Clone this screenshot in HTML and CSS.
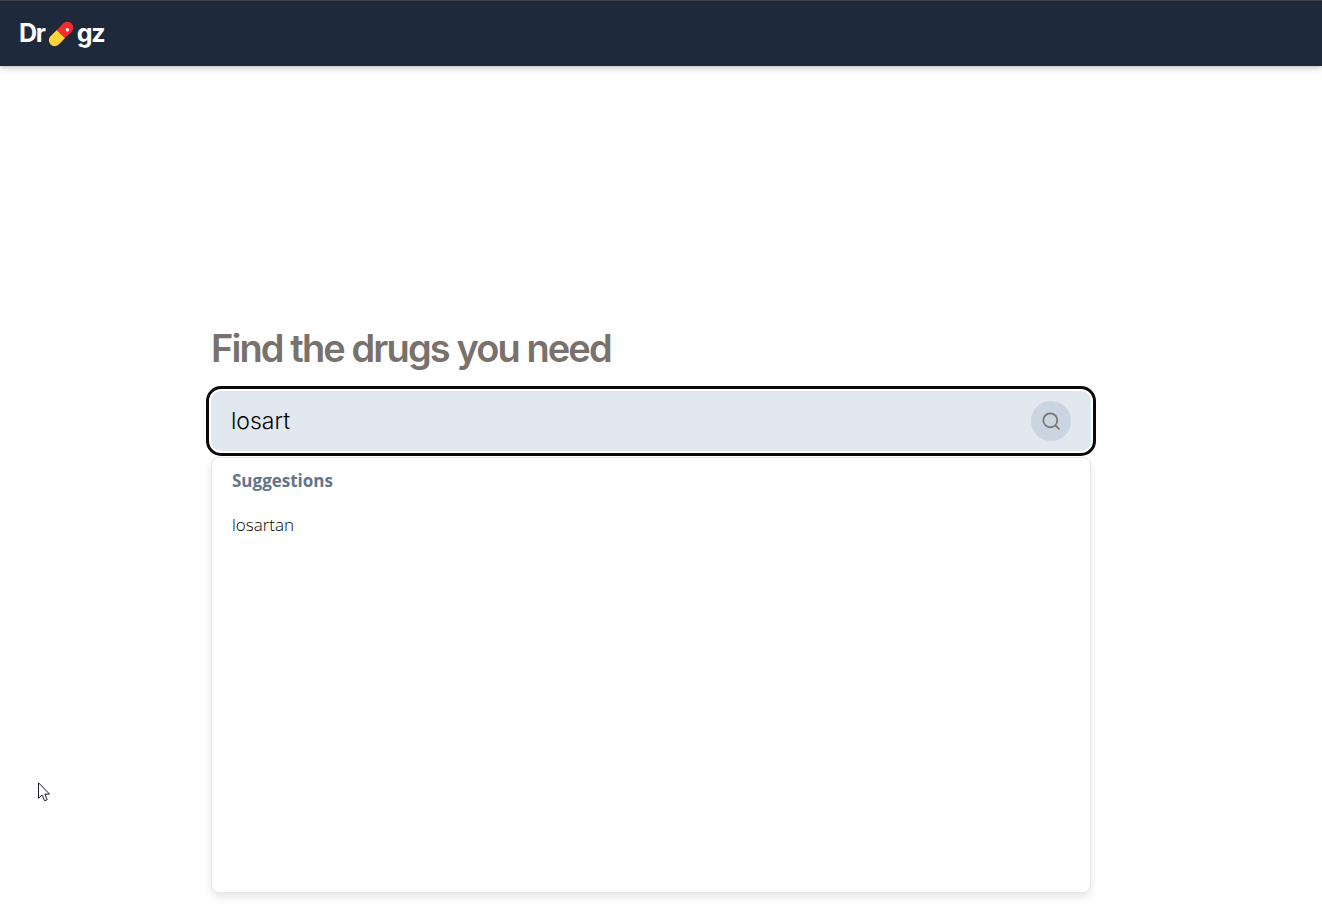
FILE: index.html
```html
<!DOCTYPE html>
<html lang="en">
<head>
<meta charset="utf-8">
<meta name="viewport" content="width=device-width, initial-scale=1">
<title>Drugz</title>
<link rel="stylesheet" href="styles.css">
</head>
<body>
<header class="site-header">
  <a class="brand" href="#" aria-label="Drugz home">
    <span>Dr</span>
    <svg class="brand-pill" viewBox="0 0 26 26" aria-hidden="true">
      <g transform="rotate(-45 13 13)">
        <path d="M13 7.200H4a5.800 5.800 0 0 0 0 11.600H13z" fill="#ffd43b"/>
        <path d="M13 7.200h9a5.800 5.800 0 0 1 0 11.600H13z" fill="#fc2b2f"/>
        <circle cx="20.500" cy="14.500" r="1.700" fill="#fff"/>
      </g>
    </svg>
    <span>gz</span>
  </a>
</header>
<main class="page">
  <section class="finder">
    <h1 class="title"><label for="drug-search">Find the drugs you need</label></h1>
    <form class="search">
      <input class="search-input" id="drug-search" type="text" value="losart" autocomplete="off" spellcheck="false">
      <button class="search-button" type="submit" aria-label="Search">
        <svg class="search-icon" viewBox="0 0 20 20" aria-hidden="true">
          <circle cx="9.300" cy="9.300" r="7"/>
          <path d="M14.200 14.200l4.300 4.300"/>
        </svg>
      </button>
    </form>
    <div class="suggestions">
      <h2 class="suggestions-title">Suggestions</h2>
      <ul class="suggestions-list">
        <li><a class="suggestion" href="#">losartan</a></li>
      </ul>
    </div>
  </section>
</main>
<svg class="pointer" viewBox="0 0 13 20" aria-hidden="true">
  <path d="M1.500 .8v15.500l3.600-3.300 2.500 5.800 2.600-1.100-2.400-5.600h4.800z" fill="#fff" stroke="#1c1c2b" stroke-width="1"/>
</svg>
</body>
</html>
```

FILE: styles.css
```css
* {
  box-sizing: border-box;
}

body {
  margin: 0;
  background: #fff;
  color: #000;
  font-family: Inter, "Liberation Sans", sans-serif;
}

.site-header {
  display: flex;
  align-items: center;
  height: 66px;
  padding: 0 19px;
  border-top: 1px solid #44434d;
  background: #1e293b;
  box-shadow: 0 1px 4px rgba(0, 0, 0, 0.2), 0 4px 8px rgba(0, 0, 0, 0.08);
}

.brand {
  display: flex;
  align-items: center;
  gap: 3px;
  color: #fff;
  font-size: 25px;
  font-weight: 700;
  line-height: 35px;
  letter-spacing: -0.05em;
  text-decoration: none;
}

.brand-pill {
  width: 26px;
  height: 26px;
}

.page {
  padding: 260px 20px 16px 0;
}

.finder {
  max-width: 880px;
  margin: 0 auto;
}

.title {
  margin: 0 0 20px;
  color: #78716c;
  font-size: 38px;
  font-weight: 600;
  line-height: 45px;
  letter-spacing: -0.05em;
}

.search {
  display: flex;
  align-items: center;
  height: 60px;
  padding: 0 20px;
  border-radius: 10px;
  background: #e2e8f0;
  outline: 3px solid #0a0a0a;
  outline-offset: 2px;
}

.search-input {
  flex: 1;
  min-width: 0;
  height: 60px;
  padding: 0;
  border: 0;
  outline: 0;
  background: transparent;
  color: #000;
  font: 300 23px/30px Inter, "Liberation Sans", sans-serif;
}

.search-button {
  display: flex;
  align-items: center;
  justify-content: center;
  width: 40px;
  height: 40px;
  padding: 0;
  border: 0;
  border-radius: 50%;
  background: #cbd5e1;
  color: #78716c;
}

.search-icon {
  width: 20px;
  height: 20px;
  fill: none;
  stroke: currentColor;
  stroke-width: 1.7;
}

.suggestions {
  min-height: 436px;
  margin-top: 6px;
  padding: 8px 20px;
  border: 1px solid #e7e7e7;
  border-radius: 8px;
  background: #fff;
  box-shadow: 0 4px 8px rgba(0, 0, 0, 0.1);
  font-family: "Open Sans", "Noto Sans", sans-serif;
}

.suggestions-title {
  margin: 0;
  color: #64748b;
  font-size: 17px;
  font-weight: 700;
  line-height: 30px;
}

.suggestions-list {
  margin: 14px 0 0;
  padding: 0;
  list-style: none;
}

.suggestion {
  display: block;
  color: #000;
  font-size: 17px;
  font-weight: 300;
  line-height: 30px;
  text-decoration: none;
}

.pointer {
  position: absolute;
  top: 782px;
  left: 37px;
  width: 13px;
  height: 20px;
}
```
